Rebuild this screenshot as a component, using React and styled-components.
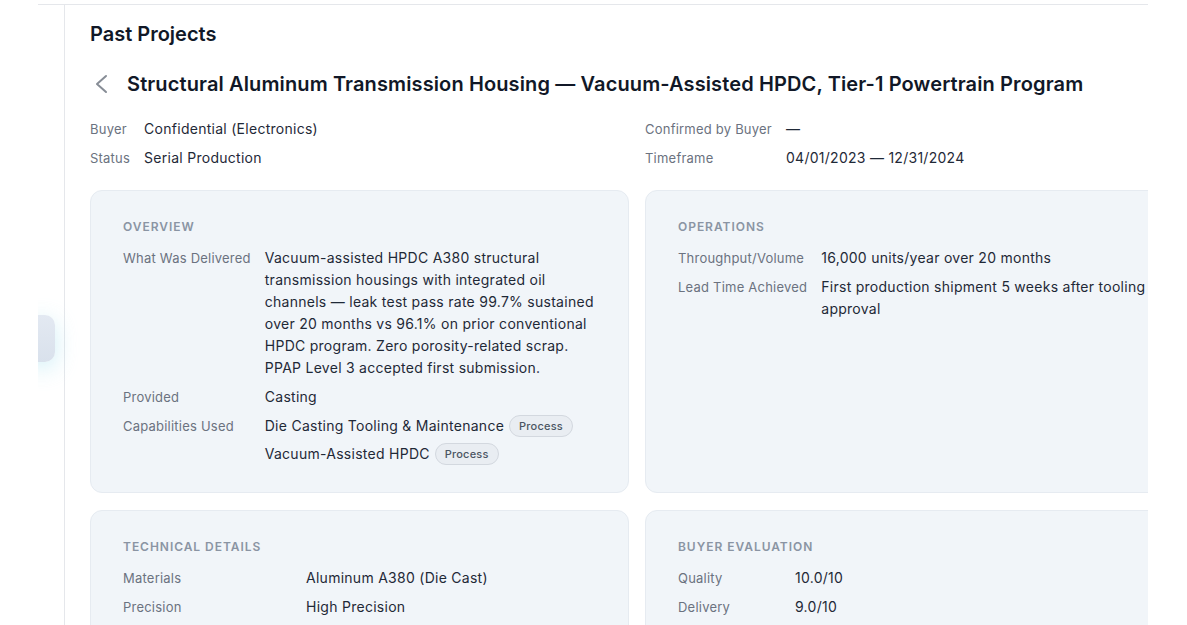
import styled, { createGlobalStyle } from "styled-components";

const GlobalStyle = createGlobalStyle`
  html, body {
    margin: 0;
    padding: 0;
    background: #ffffff;
    overflow: hidden;
  }
  body {
    font-family: Inter, "Noto Sans", "Liberation Sans", sans-serif;
    color: #1f2937;
  }
  * {
    box-sizing: border-box;
  }
`;

const overview = {
  delivered:
    "Vacuum-assisted HPDC A380 structural transmission housings with integrated oil channels — leak test pass rate 99.7% sustained over 20 months vs 96.1% on prior conventional HPDC program. Zero porosity-related scrap. PPAP Level 3 accepted first submission.",
  provided: "Casting",
  capabilities: [
    { name: "Die Casting Tooling & Maintenance", kind: "Process" },
    { name: "Vacuum-Assisted HPDC", kind: "Process" },
  ],
};

const operations = [
  { label: "Throughput/Volume", value: "16,000 units/year over 20 months" },
  { label: "Lead Time Achieved", value: "First production shipment 5 weeks after tooling approval" },
];

const technical = [
  { label: "Materials", value: "Aluminum A380 (Die Cast)" },
  { label: "Precision", value: "High Precision" },
];

const evaluation = [
  { label: "Quality", value: "10.0/10" },
  { label: "Delivery", value: "9.0/10" },
];

export default function App() {
  return (
    <>
      <GlobalStyle />
      <Frame>
        <Strip>
          <Handle />
        </Strip>
        <Main>
          <PageTitle>Past Projects</PageTitle>

          <TitleRow>
            <BackButton aria-label="Back">
              <svg width="14" height="20" viewBox="0 0 14 20" fill="none">
                <path
                  d="M12 2 L3 10 L12 18"
                  stroke="currentColor"
                  strokeWidth="2"
                  strokeLinecap="round"
                  strokeLinejoin="round"
                />
              </svg>
            </BackButton>
            <ProjectTitle>
              Structural Aluminum Transmission Housing — Vacuum-Assisted HPDC, Tier-1 Powertrain Program
            </ProjectTitle>
          </TitleRow>

          <Meta>
            <MetaList>
              <MetaLabel>Buyer</MetaLabel>
              <MetaValue>Confidential (Electronics)</MetaValue>
              <MetaLabel>Status</MetaLabel>
              <MetaValue>Serial Production</MetaValue>
            </MetaList>
            <MetaList>
              <MetaLabel>Confirmed by Buyer</MetaLabel>
              <MetaValue>—</MetaValue>
              <MetaLabel>Timeframe</MetaLabel>
              <MetaValue>04/01/2023 — 12/31/2024</MetaValue>
            </MetaList>
          </Meta>

          <Cards>
            <Card>
              <SectionTitle>Overview</SectionTitle>
              <Fields>
                <FieldLabel>What Was Delivered</FieldLabel>
                <FieldValue>{overview.delivered}</FieldValue>
                <FieldLabel>Provided</FieldLabel>
                <FieldValue>{overview.provided}</FieldValue>
                <FieldLabel>Capabilities Used</FieldLabel>
                <FieldValue>
                  <CapabilityList>
                    {overview.capabilities.map((c) => (
                      <Capability key={c.name}>
                        {c.name}
                        <Pill>{c.kind}</Pill>
                      </Capability>
                    ))}
                  </CapabilityList>
                </FieldValue>
              </Fields>
            </Card>

            <Card>
              <SectionTitle>Operations</SectionTitle>
              <Fields>
                {operations.map((f) => (
                  <Field key={f.label} {...f} />
                ))}
              </Fields>
            </Card>

            <Card>
              <SectionTitle>Technical Details</SectionTitle>
              <Fields $labelWidth="169px">
                {technical.map((f) => (
                  <Field key={f.label} {...f} />
                ))}
              </Fields>
            </Card>

            <Card>
              <SectionTitle>Buyer Evaluation</SectionTitle>
              <Fields $labelWidth="103px">
                {evaluation.map((f) => (
                  <Field key={f.label} {...f} />
                ))}
              </Fields>
            </Card>
          </Cards>
        </Main>
      </Frame>
    </>
  );
}

const Field = ({ label, value }) => (
  <>
    <FieldLabel>{label}</FieldLabel>
    <FieldValue>{value}</FieldValue>
  </>
);

const Frame = styled.div`
  display: flex;
  margin: 4px 0 0 38px;
  width: 1110px;
  height: calc(100vh - 4px);
  border-top: 1px solid #e5e7eb;
  overflow: hidden;
`;

const Strip = styled.aside`
  position: relative;
  flex-shrink: 0;
  width: 27px;
  border-right: 1px solid #e5e7eb;
`;

const Handle = styled.div`
  position: absolute;
  top: 310px;
  left: -10px;
  width: 27px;
  height: 47px;
  border-radius: 10px;
  background: linear-gradient(180deg, #e3e9f2 0%, #d9e1ec 100%);
  box-shadow: 0 6px 22px rgba(150, 220, 238, 0.45);
`;

const Main = styled.main`
  flex-shrink: 0;
  width: 1094px;
  margin-left: 25px;
  padding-top: 15px;
`;

const PageTitle = styled.h1`
  margin: 0;
  font-size: 20px;
  line-height: 28px;
  font-weight: 600;
  color: #111827;
`;

const TitleRow = styled.div`
  display: flex;
  align-items: center;
  gap: 15px;
  margin-top: 22px;
`;

const BackButton = styled.button`
  display: flex;
  align-items: center;
  justify-content: center;
  width: 22px;
  height: 28px;
  padding: 0;
  border: none;
  background: transparent;
  color: #878d96;
  cursor: pointer;
`;

const ProjectTitle = styled.h2`
  margin: 0;
  font-size: 20px;
  line-height: 28px;
  font-weight: 600;
  letter-spacing: 0.12px;
  color: #111827;
  white-space: nowrap;
`;

const Meta = styled.div`
  display: grid;
  grid-template-columns: 1fr 1fr;
  column-gap: 16px;
  margin-top: 20px;
`;

const MetaList = styled.dl`
  display: grid;
  grid-template-columns: auto 1fr;
  column-gap: 14px;
  row-gap: 7px;
  margin: 0;
  align-content: start;
`;

const MetaLabel = styled.dt`
  font-size: 13px;
  line-height: 22px;
  letter-spacing: 0.22px;
  color: #6b7280;
`;

const MetaValue = styled.dd`
  margin: 0;
  font-size: 14px;
  line-height: 22px;
  letter-spacing: 0.27px;
  color: #1f2937;
`;

const Cards = styled.div`
  display: grid;
  grid-template-columns: 1fr 1fr;
  gap: 17px 16px;
  margin-top: 21px;
`;

const Card = styled.section`
  background: #f1f5f9;
  border: 1px solid #e6ebf1;
  border-radius: 12px;
  padding: 28px 32px 27px 32px;
`;

const SectionTitle = styled.h3`
  margin: 0 0 12px;
  font-size: 12px;
  line-height: 16px;
  font-weight: 600;
  letter-spacing: 0.08em;
  text-transform: uppercase;
  color: #8a94a3;
`;

const Fields = styled.dl`
  display: grid;
  grid-template-columns: ${(p) => p.$labelWidth || "auto"} 1fr;
  column-gap: 14px;
  row-gap: 7px;
  margin: 0;
`;

const FieldLabel = styled.dt`
  font-size: 13px;
  line-height: 22px;
  letter-spacing: 0.22px;
  color: #6b7280;
`;

const FieldValue = styled.dd`
  margin: 0;
  font-size: 14px;
  line-height: 22px;
  letter-spacing: 0.27px;
  color: #1f2937;
`;

const CapabilityList = styled.div`
  display: flex;
  flex-direction: column;
  gap: 6px;
`;

const Capability = styled.div`
  display: flex;
  align-items: center;
  gap: 5px;
`;

const Pill = styled.span`
  display: inline-block;
  padding: 0 9px;
  font-size: 11px;
  line-height: 20px;
  font-weight: 500;
  letter-spacing: 0.2px;
  color: #4b5563;
  background: #e9edf2;
  border: 1px solid #d3d8df;
  border-radius: 999px;
`;
